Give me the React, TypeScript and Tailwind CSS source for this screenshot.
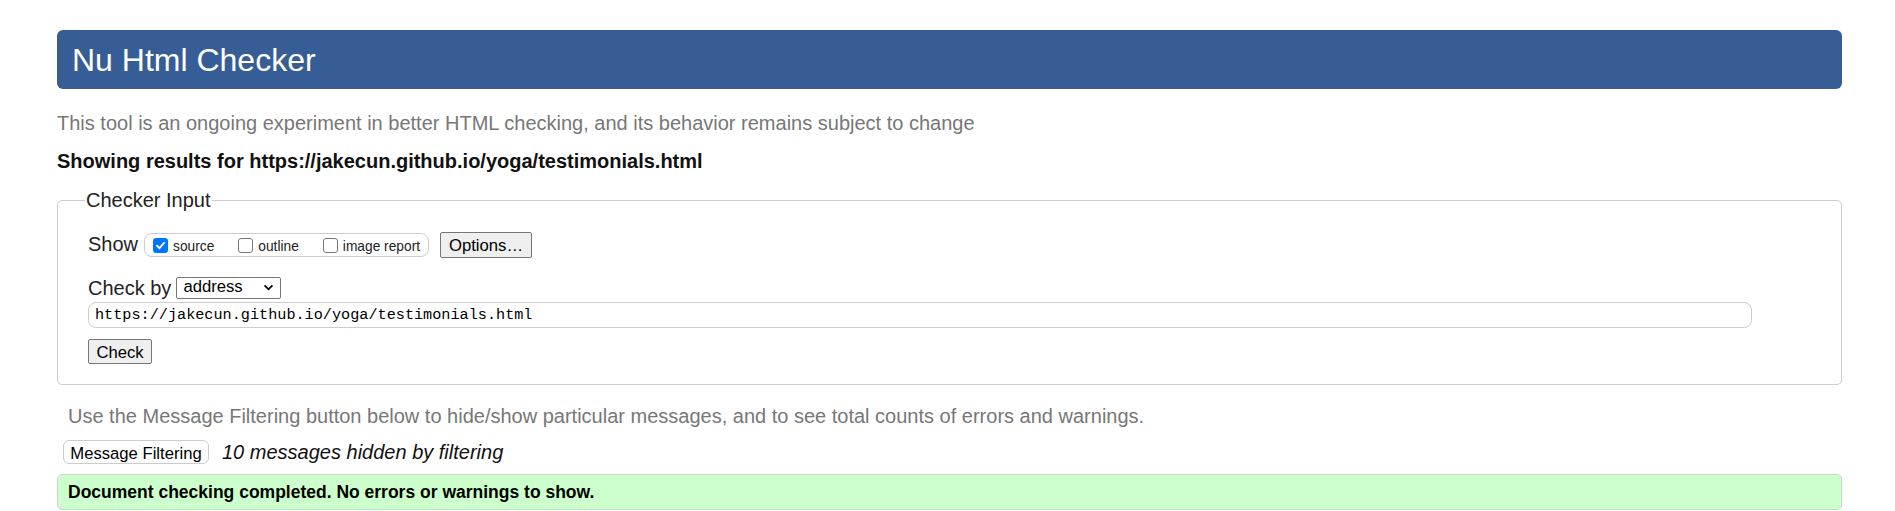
import { useState } from "react";

const sans = { fontFamily: '"Liberation Sans", Arial, sans-serif' };

function Box({ checked }: { checked: boolean }) {
  return checked ? (
    <span className="inline-flex items-center justify-center w-[15px] h-[15px] rounded-[3px] bg-[#0075ff]">
      <svg viewBox="0 0 12 12" className="w-[11px] h-[11px]">
        <path d="M2.2 6.3 L4.9 8.9 L9.8 3.2" fill="none" stroke="white" strokeWidth="2" strokeLinecap="square" />
      </svg>
    </span>
  ) : (
    <span className="inline-block w-[15px] h-[15px] rounded-[3px] border border-[#767676] bg-white" />
  );
}

export default function App() {
  const [url] = useState("https://jakecun.github.io/yoga/testimonials.html");

  const toggles = [
    { label: "source", checked: true, gap: "mr-[24px]" },
    { label: "outline", checked: false, gap: "mr-[24px]" },
    { label: "image report", checked: false, gap: "mr-[8px]" },
  ];

  return (
    <div className="min-h-[511px] bg-white pt-[30px] pl-[57px] pr-[53px]" style={sans}>
      <h1 className="h-[59px] flex items-center pl-[15px] rounded-[6px] bg-[#365d95] text-white text-[32px] font-normal">
        Nu Html Checker
      </h1>

      <p className="mt-[22px] text-[20px] leading-[24px] text-[#777]">
        This tool is an ongoing experiment in better HTML checking, and its behavior remains subject to change
      </p>
      <p className="mt-[14px] text-[20px] leading-[24px] font-bold text-[#111]">Showing results for {url}</p>

      <fieldset className="mt-[15px] border border-[#ccc] rounded-[5px] pl-[30px] pr-[89px] pb-[19px]">
        <legend className="-ml-[3px] px-[1px] text-[20px] leading-[24px] text-[#222]">Checker Input</legend>

        <div className="mt-[20px] h-[26px] flex items-center">
          <span className="text-[20px] leading-[24px] text-[#222] mr-[6px] -mt-[2px]">Show</span>
          <div className="h-[24px] flex items-center border border-[#ccc] rounded-[8px] pl-[8px]">
            {toggles.map((t) => (
              <label key={t.label} className={`flex items-center ${t.gap}`}>
                <Box checked={t.checked} />
                <span className="ml-[5px] text-[13.75px] text-[#222] leading-none pt-[3px]">{t.label}</span>
              </label>
            ))}
          </div>
          <button className="ml-[11px] h-[26px] w-[92px] border border-[#767676] rounded-[2px] bg-[#efefef] text-[16.67px] text-black">
            Options…
          </button>
        </div>

        <div className="mt-[19px] h-[21px] flex items-center">
          <span className="text-[20px] leading-[24px] text-[#222] mr-[5px]">Check by</span>
          <div className="h-[22px] w-[105px] flex items-center justify-between border border-[#767676] rounded-[2px] bg-white pl-[6px] pr-[6px]">
            <span className="text-[16.67px] text-black leading-none">address</span>
            <svg viewBox="0 0 12 8" className="w-[11px] h-[7px]">
              <path d="M1.5 1.5 L6 6 L10.5 1.5" fill="none" stroke="black" strokeWidth="2" />
            </svg>
          </div>
        </div>

        <div
          className="mt-[4px] h-[26px] flex items-center border border-[#ccc] rounded-[8px] pl-[6px] text-[15.2px] text-black"
          style={{ fontFamily: '"Liberation Mono", "DejaVu Sans Mono", monospace' }}
        >
          {url}
        </div>

        <button className="mt-[11px] h-[25px] w-[64px] border border-[#767676] rounded-[2px] bg-[#efefef] text-[16.67px] text-black">
          Check
        </button>
      </fieldset>

      <p className="mt-[19px] pl-[11px] text-[20px] leading-[24px] text-[#777]">
        Use the Message Filtering button below to hide/show particular messages, and to see total counts of errors and warnings.
      </p>

      <div className="mt-[12px] h-[24px] flex items-center pl-[6px]">
        <button className="h-[24px] w-[146px] border border-[#ccc] rounded-[6px] bg-white text-[16.67px] text-black">
          Message Filtering
        </button>
        <span className="ml-[13px] text-[20px] italic text-[#111]">10 messages hidden by filtering</span>
      </div>

      <div className="mt-[10px] h-[36px] flex items-center pl-[10px] border border-[#c4dcc4] rounded-[5px] bg-[#ccffcc] text-[17.5px] font-bold text-black">
        Document checking completed. No errors or warnings to show.
      </div>
    </div>
  );
}
